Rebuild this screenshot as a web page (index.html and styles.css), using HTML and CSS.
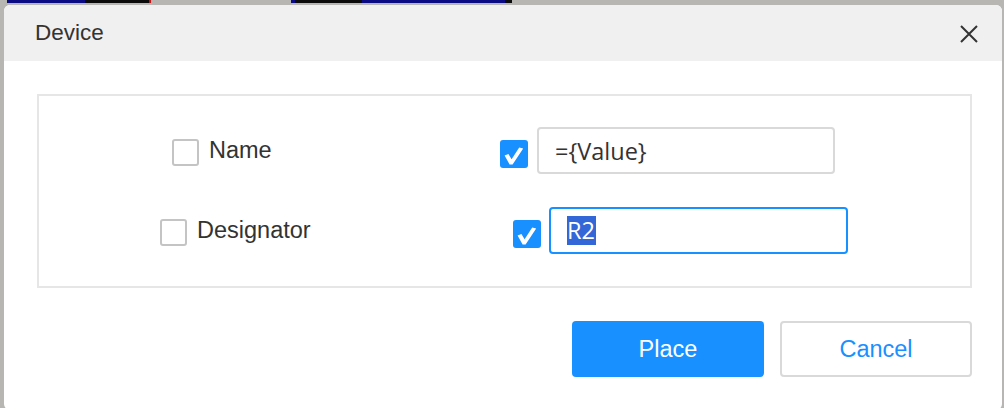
FILE: index.html
```html
<!DOCTYPE html>
<html>
<head>
<meta charset="utf-8">
<link rel="stylesheet" href="styles.css">
</head>
<body>
<div class="screen">
  <div class="topstrip">
    <span class="seg navy w78 ml7"></span>
    <span class="seg black w64"></span>
    <span class="seg red w2"></span>
    <span class="seg gap140"></span>
    <span class="seg navy w4"></span>
    <span class="seg black w67"></span>
    <span class="seg navy w143"></span>
    <span class="seg black w7"></span>
  </div>
  <div class="dialog">
    <div class="header">
      <span class="title">Device</span>
      <span class="close">
        <svg width="20" height="20" viewBox="0 0 20 20"><path d="M2 2 L18 18 M18 2 L2 18" stroke="#333" stroke-width="2" fill="none"/></svg>
      </span>
    </div>
    <div class="body">
      <div class="panel">
        <div class="row row-name">
          <label class="opt opt-name"><span class="cb"></span><span class="lbl">Name</span></label>
          <span class="cb-on">
            <svg width="28" height="28" viewBox="0 0 28 28"><path d="M4.6 15.6 L8.4 13.9 L11.6 19.2 L19.2 7.4 L23.2 8.6 L12.6 24.4 L9.6 24.4 Z" fill="#fff"/></svg>
          </span>
          <span class="input">={Value}</span>
        </div>
        <div class="row row-des">
          <label class="opt opt-des"><span class="cb"></span><span class="lbl">Designator</span></label>
          <span class="cb-on">
            <svg width="28" height="28" viewBox="0 0 28 28"><path d="M4.6 15.6 L8.4 13.9 L11.6 19.2 L19.2 7.4 L23.2 8.6 L12.6 24.4 L9.6 24.4 Z" fill="#fff"/></svg>
          </span>
          <span class="input focus"><span class="sel">R2</span></span>
        </div>
      </div>
      <div class="footer">
        <button class="btn primary">Place</button>
        <button class="btn ghost">Cancel</button>
      </div>
    </div>
  </div>
</div>
</body>
</html>
```
FILE: styles.css
```css
* { box-sizing: border-box; }
html, body { margin: 0; padding: 0; }
body {
  width: 1004px;
  height: 408px;
  overflow: hidden;
  background: #b8b6b2;
  font-family: "Liberation Sans", Arial, sans-serif;
  color: #333;
}
.screen { width: 1004px; height: 408px; overflow: hidden; }
.topstrip { height: 5px; display: flex; align-items: flex-start; }
.seg { display: block; height: 3px; }
.navy { background: #0a0a82; }
.black { background: #0b0b0b; }
.red { background: #d01010; }
.ml7 { margin-left: 7px; }
.w78 { width: 78px; }
.w64 { width: 64px; }
.w2 { width: 2px; }
.gap140 { width: 140px; }
.w4 { width: 4px; }
.w67 { width: 67px; }
.w143 { width: 143px; }
.w7 { width: 7px; }

.dialog {
  margin-left: 4px;
  width: 998px;
  height: 405px;
  background: #fff;
  border-radius: 6px;
  overflow: hidden;
}
.header {
  height: 56px;
  background: #f0f0f0;
  display: flex;
  align-items: center;
  justify-content: space-between;
  padding: 0 23px 0 31px;
}
.title { font-size: 22.5px; color: #333; }
.close { display: flex; width: 20px; height: 20px; margin-top: 1px; }

.body { padding: 33px 30px 0 33px; }
.panel {
  border: 2px solid #e6e6e6;
  height: 194px;
  padding-top: 31px;
  display: flex;
  flex-direction: column;
  gap: 33px;
}
.row { display: flex; align-items: center; height: 47px; }
.row-name { padding-left: 133px; }
.row-des { padding-left: 121px; }
.opt { display: flex; align-items: center; gap: 10px; }
.opt-name { width: 328px; }
.opt-des { width: 353px; }
.cb {
  width: 27px;
  height: 27px;
  border: 2px solid #c4c4c4;
  border-radius: 3px;
  margin-top: 4px;
  flex: none;
}
.lbl { font-size: 23.5px; color: #333; }
.cb-on {
  width: 28px;
  height: 28px;
  background: #1890ff;
  border-radius: 3px;
  margin-top: 7px;
  display: flex;
  flex: none;
}
.row-name .cb-on { margin-right: 9px; }
.row-des .cb-on { margin-right: 8px; }
.input {
  height: 47px;
  border: 2px solid #d9d9d9;
  border-radius: 4px;
  padding: 0 16px;
  display: flex;
  align-items: center;
  font-family: "Open Sans", "Noto Sans", sans-serif;
  font-size: 23.5px;
  color: #333;
}
.row-name .input { width: 298px; }
.row-des .input { width: 299px; }
.input.focus { border-color: #1890ff; }
.sel {
  background: #3366d6;
  color: #fff;
  line-height: 29px;
  padding-right: 1px;
}

.footer {
  display: flex;
  justify-content: flex-end;
  gap: 16px;
  padding-top: 33px;
}
.btn {
  width: 192px;
  height: 56px;
  border-radius: 4px;
  font-family: "Liberation Sans", Arial, sans-serif;
  font-size: 23.5px;
  cursor: pointer;
}
.primary { background: #1890ff; border: none; color: #fff; }
.ghost { background: #fff; border: 2px solid #d9d9d9; color: #1890ff; }
```
